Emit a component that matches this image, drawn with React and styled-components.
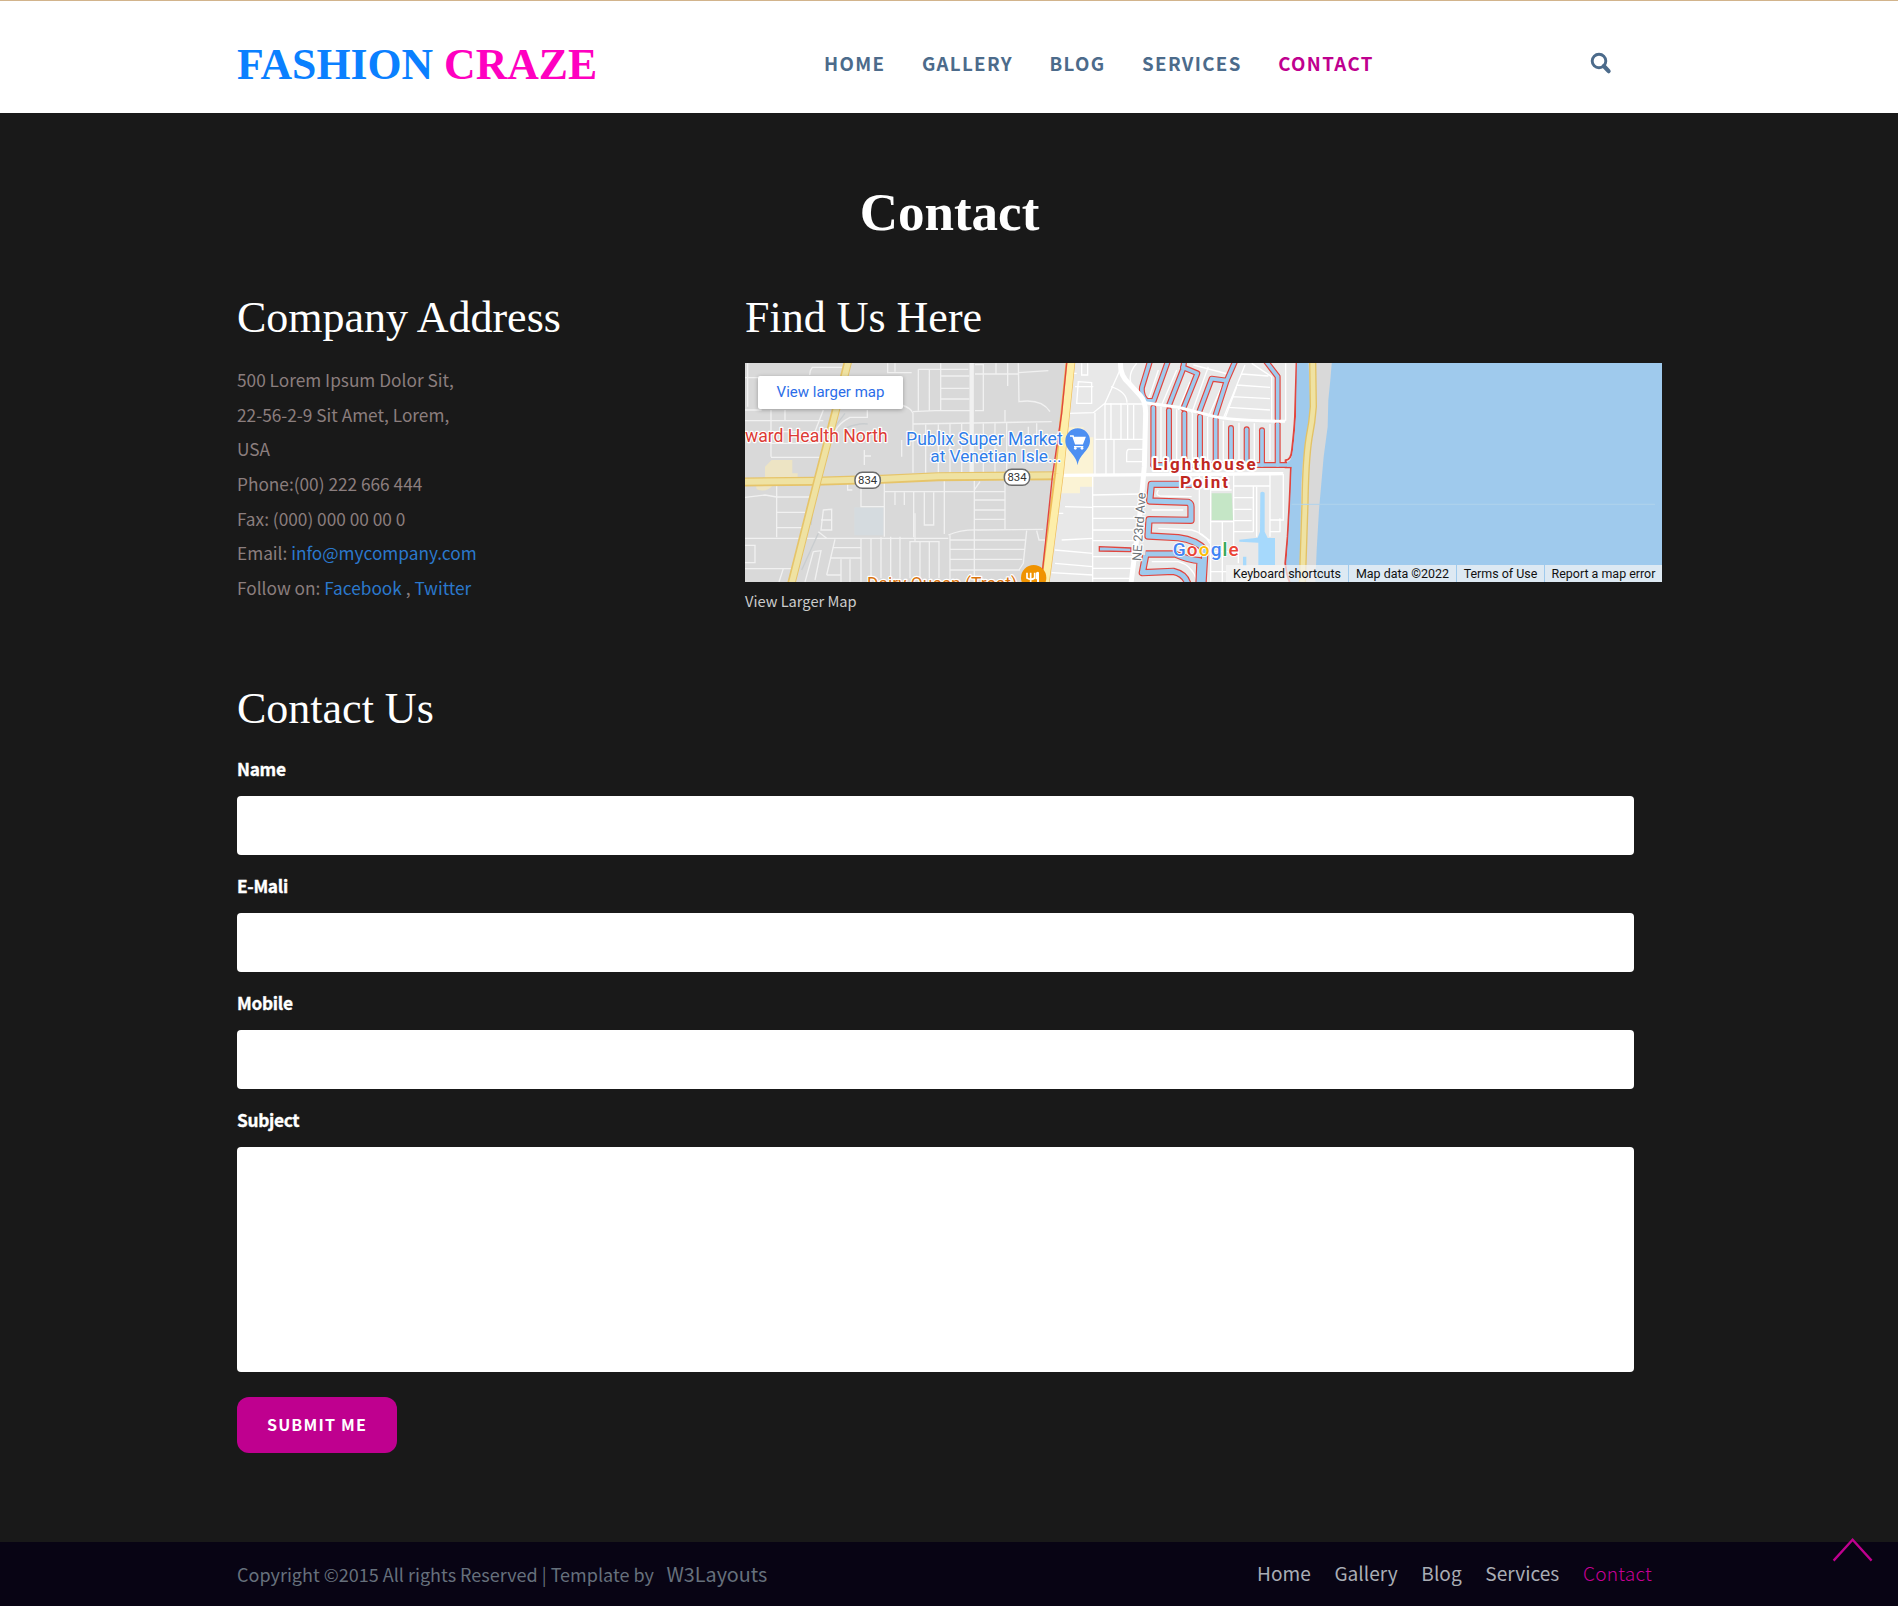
import React from "react";
import styled, { createGlobalStyle } from "styled-components";

const sans = '"Noto Sans CJK SC", "Noto Sans", sans-serif';
const serif = '"Liberation Serif", "Times New Roman", serif';
const roboto = 'Roboto, "Liberation Sans", sans-serif';
const pink = "#bf008f";

const GlobalStyle = createGlobalStyle`
  * { box-sizing: border-box; }
  body { margin: 0; background: #191919; font-family: ${sans}; overflow-x: hidden; }
  a { text-decoration: none; }
`;

const Header = styled.header`
  display: grid;
  grid-template-columns: 587px 766px auto;
  align-items: start;
  height: 113px;
  padding-left: 237px;
  background: #fff;
  border-top: 1px solid #d2b48c;
`;
const Logo = styled.a`
  margin-top: 38px;
  font: 700 43.75px/50px ${serif};
  color: #0a80ff;
  white-space: nowrap;
  span { color: #ff00c0; }
`;
const Nav = styled.nav`
  display: flex;
  gap: 36.5px;
  margin-top: 46px;
`;
const NavLink = styled.a`
  font-size: 18.7px;
  font-weight: 700;
  line-height: 31px;
  letter-spacing: 1.35px;
  color: ${(p) => (p.$active ? pink : "#4c6b8b")};
`;
const SearchButton = styled.button`
  margin: 51px 0 0;
  padding: 0;
  width: 22px;
  height: 24px;
  border: 0;
  background: none;
  svg { display: block; }
`;

const Main = styled.main`
  height: 1429px;
  padding: 69px 236px 0 237px;
`;
const PageTitle = styled.h1`
  margin: 0 0 51px;
  font: 700 53px/60px ${serif};
  color: #fff;
  text-align: center;
`;
const SectionTitle = styled.h2`
  margin: 0 0 ${(p) => p.$gap}px;
  font: 400 44px/50px ${serif};
  color: #fff;
`;
const Columns = styled.div`
  display: grid;
  grid-template-columns: 508px 917px;
  height: 320px;
`;
const Address = styled.address`
  font-style: normal;
  font-size: 17.25px;
  line-height: 34.65px;
  color: #8b7e7e;
  a { color: #2b78cc; }
`;
const MapFrame = styled.div`
  position: relative;
  height: 219px;
  overflow: hidden;
  > svg { display: block; }
`;
const LargerMapButton = styled.a`
  position: absolute;
  left: 13px;
  top: 13px;
  width: 145px;
  height: 33px;
  border-radius: 2px;
  background: #fff;
  box-shadow: 0 1px 4px rgba(0, 0, 0, 0.3);
  color: #2b6de8;
  font: 400 15px/32px ${roboto};
  text-align: center;
`;
const Credits = styled.div`
  position: absolute;
  right: 0;
  bottom: 0;
  display: flex;
  gap: 1px;
`;
const Credit = styled.span`
  width: ${(p) => p.$width}px;
  height: 17px;
  background: rgba(245, 245, 245, 0.72);
  color: #111;
  font: 400 12.45px/17px ${roboto};
  text-align: center;
  white-space: nowrap;
`;
const MapCaption = styled.a`
  display: block;
  margin-top: 7px;
  font-size: 14.65px;
  line-height: 24px;
  color: #ccc;
`;

const FormSection = styled.section`
  margin-top: 71px;
`;
const Field = styled.label`
  display: block;
  width: 1397px;
  margin-bottom: ${(p) => p.$gap || 19}px;
`;
const FieldLabel = styled.span`
  display: block;
  margin-bottom: 15px;
  font-size: 17.3px;
  font-weight: 700;
  line-height: 24px;
  letter-spacing: -0.3px;
  -webkit-text-stroke: 0.35px #fff;
  color: #fff;
`;
const Input = styled.input`
  display: block;
  width: 100%;
  height: 59px;
  border: 0;
  border-radius: 4px;
  background: #fff;
`;
const TextArea = styled.textarea`
  display: block;
  width: 100%;
  height: 225px;
  border: 0;
  border-radius: 4px;
  background: #fff;
  resize: none;
`;
const Submit = styled.button`
  display: block;
  width: 160px;
  height: 56px;
  padding: 0 0 2px;
  border: 0;
  border-radius: 12px;
  background: ${pink};
  color: #fff;
  font: 700 16.1px/24px ${sans};
  letter-spacing: 1.2px;
`;

const Footer = styled.footer`
  display: grid;
  grid-template-columns: 1020px auto;
  height: 64px;
  padding-left: 237px;
  background: #080414;
`;
const Copyright = styled.p`
  margin: 0;
  font-size: 18.02px;
  line-height: 63px;
  color: #66707c;
  a { margin-left: 12.5px; font-size: 19.8px; color: inherit; }
`;
const FooterNav = styled.nav`
  display: flex;
  gap: 23.7px;
`;
const FooterLink = styled.a`
  font-size: 19.1px;
  line-height: 62px;
  color: ${(p) => (p.$active ? "#c60095" : "#a9adb5")};
  font-weight: ${(p) => (p.$active ? 300 : 400)};
  letter-spacing: ${(p) => (p.$active ? 0.25 : 0)}px;
`;
const BackToTop = styled.a`
  position: fixed;
  right: 24px;
  bottom: 43px;
  svg { display: block; }
`;

const canals = [
  "M316,30 L291,112 Q288,135 304,152 L326,153 L370,30",
  "M418,30 L414,58 L372,166",
  "M414,52 L457,70 L415,175",
  "M572,30 L545,92 L500,86 L463,185",
  "M545,92 L512,194",
  "M660,30 L698,80 L698,206",
  "M325,173 V345", "M372,181 V345", "M418,190 V345", "M465,200 V345", "M512,208 V345",
  "M558,234 V345", "M605,238 V345", "M651,241 V345", "M698,223 V345",
  "M325,345 H745",
];
const wideCanals = [
  "M440,403 H319 L314,453 L430,457 Q438,460 438,470 V511 L312,509 L309,558 L400,563 Q455,570 480,600 L474,700",
  "M302,612 L390,612 Q430,630 465,632 L462,700",
  "M302,616 L292,668 L385,664 Q420,672 428,700",
];
const coast =
  "M755,30 L750,200 Q748,240 741,300 Q738,330 722,331 L722,352 L738,352 L734,450 L728,560 L721,640 Q726,680 736,700";

const streets = [
  "M30,293 H70 M30,390 H80 M108,390 V530 M30,422 H265 M108,455 H258 M108,490 H250 M108,532 H258",
  "M265,390 L238,460 M150,390 V420 M38,250 V380 M125,612 V772 M30,652 L90,645 L125,651 H228",
  "M125,697 H215 M125,743 H205 M30,775 H640 M30,866 H170 M145,866 L132,906 M30,796 H60 V848 H30",
  "M226,272 L232,262 H325 M226,272 L224,285 M500,375 Q530,385 534,400 V578 M534,395 L600,392 H715",
  "M458,250 V278 H530 M480,250 V275 M550,268 H700 M550,268 V392 M583,268 V392 M617,250 V392 M617,288 H703 M617,325 H703 M617,357 H703",
  "M534,432 L950,425 M572,432 V578 M610,430 V578 M645,430 V578 M680,430 V578 M745,428 V578 M780,428 V578 M815,428 V578",
  "M720,254 H745 V392 H720 M720,282 H850 M783,250 V282 M850,250 L852,365 Q920,355 945,395 M850,278 L940,272",
  "M448,635 H810 M448,606 V680 M448,680 V770 M378,610 V680 H448 M338,608 V630 H352",
  "M480,637 V675 M508,637 V675 M536,635 V772 M568,637 V735 H596 V637 M628,600 V762 M718,600 V906",
  "M810,605 V747 M718,630 L735,605 M718,660 H810 M718,690 H810 M718,718 H810",
  "M640,765 Q680,748 730,750 L925,748 M645,766 V906 M645,780 H870 M645,808 H870 M645,838 H862 M645,870 H855 M875,752 L865,850 L852,870",
  "M300,778 L275,885 M295,803 H378 M285,834 H378 M275,885 H318 M378,775 V906 M408,775 V895 M438,772 V895 M467,770 V895 M495,770 V895",
  "M318,838 V906 M345,838 V906 M525,895 V785 H612 V895 M555,785 V895 M583,785 V895 M540,700 V785",
  "M265,690 L290,688 V750 H258 Z M258,720 H290 M250,755 L275,775 M235,815 L258,812 L240,900 M235,815 L210,906",
  "M388,510 V555 M388,528 H408 M500,480 V530 M810,390 V425 M905,752 L912,780 H930 V800",
  "M397,390 V412 H345 Q310,430 300,455 M818,318 V250 M880,440 V490 M905,430 V480",
];
const eastStreets = [
  "M70,190 L145,188 L180,160 L225,60 M180,160 V270 M150,188 V375 M150,268 H295 M183,268 V372 M207,268 V372 M180,162 H298",
  "M198,160 V268 M228,160 V268 M248,165 V268 M266,165 V268 M198,110 Q245,125 246,158 M90,110 H145 M110,40 V75 H128 V40",
  "M295,298 H250 Q245,300 245,312 V335 H295 M100,95 L95,160 H140 V98 Z M60,70 H95",
  "M275,40 Q240,80 268,120 M340,60 L310,150 M395,60 L350,165 M445,45 L560,75 M435,95 L400,180 M490,50 L440,190 M530,110 L490,200 M575,110 L540,205",
  "M348,170 V340 M395,178 V340 M442,190 V340 M488,200 V340 M535,212 V340 M582,218 V335 M628,220 V335 M675,222 V330",
  "M600,45 L535,205 M590,72 L670,78 M575,105 L675,112 M560,140 L675,146 M550,172 L675,180 M620,40 L680,80 V210 M722,40 V212 M722,212 L700,216",
  "M143,380 V695 M143,435 L290,432 M143,470 H288 M143,505 H285 M143,540 H280 M143,572 H275 M143,620 H265 M143,655 H262 M143,685 H258",
  "M60,470 L143,472 M40,490 H55 M50,570 L143,565 M30,600 L143,610 M30,640 L143,650 M20,668 L143,675",
  "M340,420 Q330,435 345,438 L440,440 M320,480 H415 M340,535 L440,540 Q480,550 495,580 M320,635 H400 Q440,645 455,690",
  "M463,375 V550 L495,572 M497,375 V695 M497,420 H560 M566,375 V600 M566,408 H675 M566,443 H625 M566,478 H620 M566,512 H620 M566,545 H625 M625,408 V545",
  "M675,372 V545 H705 V505 M715,372 V510 H675 M497,515 H565 M532,515 V695 M497,605 H580 V640 M497,665 H545 M635,410 V560 M675,545 V560",
];

const Label = ({ x, y, size, fill, weight = 400, anchor = "start", spacing = 0, halo = "#ffffff", transform, children }) => (
  <text
    x={x}
    y={y}
    fontSize={size}
    fill={fill}
    fontWeight={weight}
    textAnchor={anchor}
    letterSpacing={spacing}
    stroke={halo}
    strokeWidth={weight > 400 ? 12 : 7}
    strokeLinejoin="round"
    paintOrder="stroke"
    fontFamily={roboto}
    transform={transform}
  >
    {children}
  </text>
);

const Shield = ({ x, y }) => (
  <g>
    <rect x={x - 38} y={y - 24} width="76" height="48" rx="22" fill="#fff" stroke="#6b6b6b" strokeWidth="4.5" />
    <text x={x} y={y + 12} fontSize="34" fontWeight="400" fill="#333" textAnchor="middle" fontFamily={roboto}>834</text>
  </g>
);

function StreetMap() {
  return (
    <svg width="917" height="219" viewBox="0 0 917 219">
      <rect width="917" height="219" fill="#9fcaed" />
      <g transform="scale(0.33333) translate(-30 -249)" fill="none">
        <path d="M30,249 H1010 L960,600 L920,910 H30 Z" fill="#d9d9d9" />
        <path d="M90,560 L110,540 H172 V580 H188 V605 H90 Z M62,612 H118 Q95,640 65,628 Z" fill="#ede4c4" />
        <rect x="358" y="682" width="88" height="84" fill="#d5dbdf" />
        <g stroke="#f1f1f1" strokeWidth="4">
          {streets.map((d) => <path key={d} d={d} />)}
        </g>
        <path d="M710,249 V580" stroke="#f1f1f1" strokeWidth="13" />
        <path d="M330,445 Q370,428 398,432 M330,400 L300,440 M235,680 L228,735 M250,760 L200,870" stroke="#c9cdcf" strokeWidth="4" />
        <g transform="translate(930 210)">
          <path d="M75,30 L755,30 L750,240 L738,330 L738,352 L734,450 L721,640 L736,700 L-10,700 Z" fill="#e8e8e8" />
          <path d="M60,232 H116 V262 H145 V410 H105 V430 H40 V380 Z" fill="#fbf3d5" />
          <g stroke="#fff" strokeWidth="4">
            {eastStreets.map((d) => <path key={d} d={d} />)}
          </g>
          <path d="M500,430 L560,430 L564,510 H500 Z" fill="#c5e6c6" />
          <path d="M646,428 Q652,422 659,428 V545 L668,564 H690 V645 H640 V578 L583,575 V569 L638,563 L645,545 Z M594,620 H604 V648 H594 Z" fill="#a6d9fc" />
          <g stroke="#e1463f" strokeWidth="18" strokeLinejoin="round" strokeLinecap="round">
            {canals.map((d) => <path key={d} d={d} />)}
          </g>
          <g stroke="#e1463f" strokeWidth="22" strokeLinejoin="round">
            {wideCanals.map((d) => <path key={d} d={d} />)}
          </g>
          <path d="M163,590 L258,594 V605 L163,603 Z" fill="#9fcaed" stroke="#e1463f" strokeWidth="4" />
          <path d={coast} stroke="#e1463f" strokeWidth="6" />
          <g stroke="#9fcaed" strokeWidth="11" strokeLinejoin="round" strokeLinecap="round">
            {canals.map((d) => <path key={d} d={d} />)}
          </g>
          <g stroke="#9fcaed" strokeWidth="15" strokeLinejoin="round">
            {wideCanals.map((d) => <path key={d} d={d} />)}
          </g>
          <path d="M756,30 L753,200 Q750,250 744,300 Q741,334 726,336 V350 L740,350 L736,450 L730,560 L724,640 Q728,680 739,700 H800 V30 Z" fill="#9fcaed" />
          <path d="M790,30 H861 L856,90 L850,150 L848,230 L836,320 L822,480 L815,600 L811,700 H763 L769,400 L774,330 L789,270 L797,180 Z" fill="#d9d9d9" />
          <path d="M803,30 L805,170 Q802,215 792,265 Q782,330 780,460 L772,700" stroke="#e3c265" strokeWidth="22" />
          <path d="M803,30 L805,170 Q802,215 792,265 Q782,330 780,460 L772,700" stroke="#efe2a2" strokeWidth="14" />
          <path d="M740,463 H1830" stroke="#b0d3ec" strokeWidth="3" />
          <path d="M300,158 L400,172 L510,200 Q560,212 720,214" stroke="#fff" strokeWidth="9" />
          <path d="M227,30 Q222,75 252,100 L287,138 Q302,155 302,190 L298,350 L285,490 L258,700" stroke="#fff" strokeWidth="15" />
          <path d="M45,376 L715,371" stroke="#fff" strokeWidth="10" />
        </g>
        <path d="M30,606 L240,604 L440,598 L610,590 L975,587" stroke="#e6c469" strokeWidth="27" />
        <path d="M30,605 L240,603 L440,597 L610,589 L975,586" stroke="#efe2a2" strokeWidth="18" />
        <path d="M340,240 L300,400 L247,603 L168,915" stroke="#e6c469" strokeWidth="25" />
        <path d="M341,240 L301,400 L248,603 L169,915" stroke="#efe2a2" strokeWidth="17" />
        <g transform="translate(930 210)">
          <path d="M77,30 L42,370 L7,640 L-2,705" stroke="#efbd5b" strokeWidth="29" />
          <path d="M79,30 L44,370 L9,640 L0,705" stroke="#fdeeaa" strokeWidth="21" />
          <path d="M66,30 L50,190 L22,380 L-12,705" stroke="#e1463f" strokeWidth="4" />
        </g>
        <Shield x={398} y={601} />
        <Shield x={846} y={592} />
        <Label x={30} y={486} size={52.8} fill="#dc3b35">ward Health North</Label>
        <Label x={983} y={494} size={52.8} fill="#2f7de9" anchor="end">Publix Super Market</Label>
        <Label x={980} y={547} size={51.8} fill="#2f7de9" anchor="end">at Venetian Isle...</Label>
        <Label x={396} y={929} size={52.4} fill="#d9730d">Dairy Queen (Treat)</Label>
        <circle cx="896" cy="893" r="38" fill="#f09300" />
        <path d="M876,878 V894 Q888,902 899,894 V878 M887,878 V915" stroke="#fff" strokeWidth="5" />
        <path d="M903,878 Q910,872 912,878 V915 H906 V898 H902 Z" fill="#fff" />
        <g transform="translate(930 210)">
          <path d="M98,346 C94,312 61,302 61,272 A37,37 0 0 1 135,272 C135,302 102,312 98,346 Z" fill="#4d8ff2" />
          <path d="M75,258 H84 L92,281 H112 L119,263 H88" stroke="#fff" strokeWidth="5" />
          <path d="M87,264 H118 L111,281 H93 Z" fill="#fff" />
          <path d="M87,290 H115" stroke="#fff" strokeWidth="4" />
          <circle cx="91" cy="295" r="4" fill="#fff" />
          <circle cx="111" cy="295" r="4" fill="#fff" />
          <Label x={480} y={361} size={51} weight={700} fill="#c0281f" anchor="middle" spacing={6}>Lighthouse</Label>
          <Label x={480} y={413} size={51} weight={700} fill="#c0281f" anchor="middle" spacing={6}>Point</Label>
          <Label x={0} y={0} size={38} fill="#6f7478" transform="translate(288 634) rotate(-86)">NE 23rd Ave</Label>
          <text x="383" y="617" fontSize="57" fontWeight="500" fontFamily={roboto} stroke="#fff" strokeWidth="5" paintOrder="stroke" letterSpacing="3.5">
            <tspan fill="#4285f4">G</tspan><tspan fill="#ea4335">o</tspan><tspan fill="#fbbc04">o</tspan><tspan fill="#4285f4">g</tspan><tspan fill="#34a853">l</tspan><tspan fill="#ea4335">e</tspan>
          </text>
        </g>
      </g>
    </svg>
  );
}

const pages = ["Home", "Gallery", "Blog", "Services", "Contact"];

export default function App() {
  return (
    <>
      <GlobalStyle />
      <Header>
        <Logo>FASHION <span>CRAZE</span></Logo>
        <Nav>
          {pages.map((p) => (
            <NavLink key={p} $active={p === "Contact"}>{p.toUpperCase()}</NavLink>
          ))}
        </Nav>
        <SearchButton aria-label="Search">
          <svg width="22" height="24" viewBox="0 0 22 24" fill="none" stroke="#4c6b8b">
            <circle cx="9" cy="9" r="6.8" strokeWidth="2.9" />
            <path d="M13.8,14 L18.6,19.2" strokeWidth="4.2" strokeLinecap="round" />
          </svg>
        </SearchButton>
      </Header>
      <Main>
        <PageTitle>Contact</PageTitle>
        <Columns>
          <section>
            <SectionTitle $gap={20}>Company Address</SectionTitle>
            <Address>
              <div>500 Lorem Ipsum Dolor Sit,</div>
              <div>22-56-2-9 Sit Amet, Lorem,</div>
              <div>USA</div>
              <div>Phone:(00) 222 666 444</div>
              <div>Fax: (000) 000 00 00 0</div>
              <div>Email: <a>info@mycompany.com</a></div>
              <div>Follow on: <a>Facebook</a> , <a>Twitter</a></div>
            </Address>
          </section>
          <section>
            <SectionTitle $gap={20}>Find Us Here</SectionTitle>
            <MapFrame>
              <StreetMap />
              <LargerMapButton>View larger map</LargerMapButton>
              <Credits>
                <Credit $width={122}>Keyboard shortcuts</Credit>
                <Credit $width={107}>Map data ©2022</Credit>
                <Credit $width={87}>Terms of Use</Credit>
                <Credit $width={117}>Report a map error</Credit>
              </Credits>
            </MapFrame>
            <MapCaption>View Larger Map</MapCaption>
          </section>
        </Columns>
        <FormSection>
          <SectionTitle $gap={23}>Contact Us</SectionTitle>
          <Field><FieldLabel>Name</FieldLabel><Input /></Field>
          <Field><FieldLabel>E-Mali</FieldLabel><Input /></Field>
          <Field><FieldLabel>Mobile</FieldLabel><Input /></Field>
          <Field $gap={25}><FieldLabel>Subject</FieldLabel><TextArea /></Field>
          <Submit>SUBMIT ME</Submit>
        </FormSection>
      </Main>
      <Footer>
        <Copyright>Copyright ©2015 All rights Reserved | Template by<a>W3Layouts</a></Copyright>
        <FooterNav>
          {pages.map((p) => (
            <FooterLink key={p} $active={p === "Contact"}>{p}</FooterLink>
          ))}
        </FooterNav>
      </Footer>
      <BackToTop aria-label="Back to top">
        <svg width="42" height="26" viewBox="0 0 42 26" fill="none" stroke={pink} strokeWidth="2.3">
          <path d="M1.6,23.6 L20.6,2.8 L39.6,23.6" />
        </svg>
      </BackToTop>
    </>
  );
}
